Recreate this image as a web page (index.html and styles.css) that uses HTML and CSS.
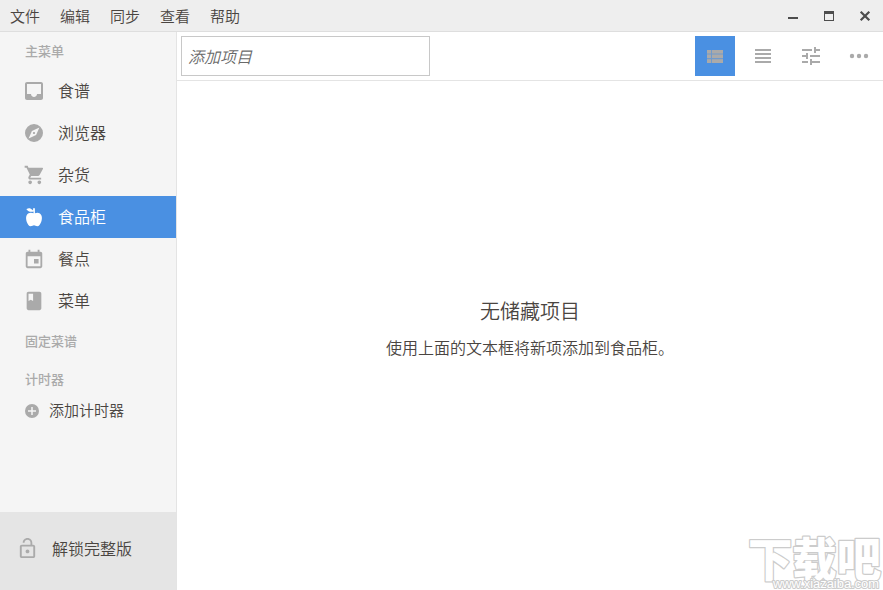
FILE: index.html
```
<!DOCTYPE html>
<html lang="zh-CN">

<head>
    <meta charset="UTF-8" />
    <title>食品柜</title>
    <link rel="stylesheet" href="styles.css">
</head>

<body>
    <div class="titlebar">
        <div class="menu">
            <span>文件</span>
            <span>编辑</span>
            <span>同步</span>
            <span>查看</span>
            <span>帮助</span>
        </div>
        <div class="window-buttons">
            <svg width="12" height="12" viewBox="0 0 12 12"><path d="M1 7h10v2H1z" /></svg>
            <svg width="12" height="12" viewBox="0 0 12 12"><path d="M1 1h10v10H1zM2 4v6h8V4z" fill-rule="evenodd" /></svg>
            <svg width="12" height="12" viewBox="0 0 12 12"><path d="M1.700 1.700l8.600 8.600M10.300 1.700l-8.600 8.600" stroke="#4d4d4d" stroke-width="2.200" /></svg>
        </div>
    </div>

    <div class="container">
        <div class="sidebar">
            <div class="section">主菜单</div>
            <div class="item">
                <svg class="icon" viewBox="0 0 24 24"><path d="M19 3H4.99c-1.11 0-1.98.89-1.98 2L3 19c0 1.1.88 2 1.99 2H19c1.1 0 2-.9 2-2V5c0-1.11-.9-2-2-2zm0 12h-4c0 1.66-1.35 3-3 3s-3-1.34-3-3H4.99V5H19v10z" /></svg>
                <span>食谱</span>
            </div>
            <div class="item">
                <svg class="icon" viewBox="0 0 24 24"><path d="M12 10.9c-.61 0-1.1.49-1.1 1.1s.49 1.1 1.1 1.1c.61 0 1.1-.49 1.1-1.1s-.49-1.1-1.1-1.1zM12 3a9 9 0 1 0 0 18 9 9 0 0 0 0-18zm2.1 11.1L6.600 17.400l3.300-7.500 7.500-3.300-3.300 7.500z" /></svg>
                <span>浏览器</span>
            </div>
            <div class="item">
                <svg class="icon icon-small" viewBox="0 0 24 24"><path transform="translate(.8)" d="M7 18c-1.1 0-1.99.9-1.99 2S5.900 22 7 22s2-.9 2-2-.9-2-2-2zM1 2v2h2l3.600 7.590-1.350 2.450c-.16.28-.25.61-.25.96 0 1.100.9 2 2 2h12v-2H7.420c-.14 0-.25-.11-.25-.25l.03-.12.9-1.630h7.450c.75 0 1.410-.41 1.750-1.030l3.580-6.490A1 1 0 0 0 20 4H5.210l-.94-2H1zm16 16c-1.100 0-1.990.9-1.990 2s.89 2 1.990 2 2-.9 2-2-.9-2-2-2z" /></svg>
                <span>杂货</span>
            </div>
            <div class="item active">
                <svg class="icon icon-small" viewBox="0 0 24 24"><path d="M20 10c2 3.500-1 12-4.200 12-1.800 0-2.800-1-3.800-1s-2 1-3.800 1C5 22 2 13.500 4 10s5.500-3 7.500-2V6C6 7.600 3.800 3.500 3.800 3.500S7 .5 11 5V2.500h2V8c2-1 5-1.500 7 2z" /></svg>
                <span>食品柜</span>
            </div>
            <div class="item">
                <svg class="icon icon-small" viewBox="0 0 24 24"><path d="M17 12h-5v5h5v-5zM16 2v2H8V2H6v2H5c-1.110 0-1.990.9-1.990 2L3 20c0 1.100.89 2 2 2h14c1.100 0 2-.9 2-2V6c0-1.100-.9-2-2-2h-1V2h-2zm3 18H5V9h14v11z" /></svg>
                <span>餐点</span>
            </div>
            <div class="item">
                <svg class="icon icon-small" viewBox="0 0 24 24"><path d="M18 2H6c-1.100 0-2 .9-2 2v16c0 1.100.9 2 2 2h12c1.100 0 2-.9 2-2V4c0-1.100-.9-2-2-2zM6 4h5v8l-2.500-1.500L6 12V4z" /></svg>
                <span>菜单</span>
            </div>
            <div class="section">固定菜谱</div>
            <div class="section">计时器</div>
            <div class="timer">
                <svg viewBox="0 0 14 14"><path d="M7 0a7 7 0 1 0 0 14A7 7 0 0 0 7 0zm4 7.750H7.750V11h-1.500V7.750H3v-1.500h3.250V3h1.500v3.250H11z" /></svg>
                <span>添加计时器</span>
            </div>
            <div class="unlock">
                <svg viewBox="0 0 24 24"><path d="M12 17c1.100 0 2-.9 2-2s-.9-2-2-2-2 .9-2 2 .9 2 2 2zm6-9h-1V6c0-2.760-2.240-5-5-5S7 3.240 7 6h1.900c0-1.710 1.390-3.100 3.100-3.100 1.710 0 3.100 1.390 3.100 3.100v2H6c-1.100 0-2 .9-2 2v10c0 1.100.9 2 2 2h12c1.100 0 2-.9 2-2V10c0-1.100-.9-2-2-2zm0 12H6V10h12v10z" /></svg>
                <span>解锁完整版</span>
            </div>
        </div>

        <div class="main">
            <div class="toolbar">
                <input type="text" class="add-input" placeholder="添加项目" />
                <div class="tools">
                    <button class="tool selected">
                        <svg viewBox="0 0 24 24"><path opacity=".4" d="M4 6h16v13H4z" /><path d="M4 6h4v3.500H4zM9 6h11v3.500H9zM4 10.500h4V14H4zM9 10.500h11V14H9zM4 15.200h4V19H4zM9 15.200h11V19H9z" /></svg>
                    </button>
                    <button class="tool">
                        <svg viewBox="0 0 24 24"><path d="M4 5h16v2H4zM4 9h16v2H4zM4 13h16v2H4zM4 17h16v2H4z" /></svg>
                    </button>
                    <button class="tool">
                        <svg viewBox="0 0 24 24"><path d="M3 17v2h6v-2H3zM3 5v2h10V5H3zm10 16v-2h8v-2h-8v-2h-2v6h2zM7 9v2H3v2h4v2h2V9H7zm14 4v-2H11v2h10zm-6-4h2V7h4V5h-4V3h-2v6z" /></svg>
                    </button>
                    <button class="tool">
                        <svg viewBox="0 0 24 24"><circle cx="5" cy="12" r="2.200" /><circle cx="12" cy="12" r="2.200" /><circle cx="19" cy="12" r="2.200" /></svg>
                    </button>
                </div>
            </div>
            <div class="empty">
                <div class="empty-title">无储藏项目</div>
                <div class="empty-text">使用上面的文本框将新项添加到食品柜。</div>
            </div>
        </div>
    </div>

    <!-- 右下角水印 -->
    <svg class="watermark" width="137" height="76" viewBox="0 0 137 76">
        <text class="mark-name" x="2" y="62" textLength="133" lengthAdjust="spacingAndGlyphs">下载吧</text>
        <text class="mark-url" x="27" y="74" textLength="106" lengthAdjust="spacingAndGlyphs">www.xiazaiba.com</text>
    </svg>
</body>

</html>
```

FILE: styles.css
```
* {
    box-sizing: border-box;
    font-family: "Noto Sans CJK SC", sans-serif;
}

body {
    margin: 0;
    height: 100vh;
    display: flex;
    flex-direction: column;
    overflow: hidden;
    font-weight: 350;
    color: #4a4541;
    background: #fff;
}

svg {
    display: block;
    flex: none;
    fill: #aaa;
}

/* 标题栏 */

.titlebar {
    height: 32px;
    flex: none;
    display: flex;
    justify-content: space-between;
    align-items: center;
    padding: 0 12px 0 10px;
    background: #eee;
    border-bottom: 1px solid #dedede;
}

.menu {
    display: flex;
    gap: 20px;
    font-size: 15px;
    line-height: 30px;
}

.window-buttons {
    display: flex;
    gap: 24px;
}

.window-buttons svg {
    fill: #4d4d4d;
}

.container {
    flex: 1;
    min-height: 0;
    display: flex;
}

/* 侧边栏 */

.sidebar {
    width: 177px;
    display: flex;
    flex-direction: column;
    background: #f5f5f5;
    border-right: 1px solid #e4e4e4;
}

.section {
    height: 38px;
    padding-left: 25px;
    font-size: 13px;
    line-height: 37px;
    font-weight: 500;
    color: #aaa;
}

.item {
    height: 42px;
    display: flex;
    align-items: center;
    gap: 12px;
    padding-left: 22px;
    font-size: 16px;
    line-height: 40px;
}

.item span {
    height: 42px;
}

.icon {
    width: 24px;
    height: 24px;
}

.icon-small {
    width: 22px;
    height: 22px;
    margin: 0 1px;
}

.item.active {
    background: #4a90e2;
    color: #fff;
}

.active .icon {
    fill: #fff;
}

.timer {
    height: 26px;
    display: flex;
    align-items: center;
    gap: 10px;
    padding-left: 25px;
    font-size: 15px;
    line-height: 24px;
}

.timer span {
    height: 26px;
}

.timer svg {
    width: 14px;
    height: 14px;
}

.unlock {
    height: 78px;
    margin-top: auto;
    display: flex;
    align-items: center;
    gap: 13px;
    padding: 0 0 6px 16px;
    font-size: 16px;
    background: #e5e5e5;
}

.unlock svg {
    width: 23px;
    height: 23px;
}

/* 主区域 */

.main {
    flex: 1;
    display: flex;
    flex-direction: column;
}

.toolbar {
    height: 49px;
    flex: none;
    display: flex;
    justify-content: space-between;
    align-items: center;
    padding: 0 4px;
    border-bottom: 1px solid #e4e4e4;
}

.add-input {
    width: 249px;
    height: 40px;
    padding: 0 6px 1px;
    border: 1px solid #c8c8c8;
    font-size: 16px;
    font-style: italic;
    font-weight: 350;
}

.add-input::placeholder {
    color: #6a6a6a;
}

.tools {
    display: flex;
    gap: 8px;
}

.tool {
    width: 40px;
    height: 40px;
    padding: 0;
    display: flex;
    align-items: center;
    justify-content: center;
    border: 0;
    background: none;
}

.tool.selected {
    background: #4a90e2;
}

.tool svg {
    width: 24px;
    height: 24px;
}

.empty {
    flex: 1;
    display: flex;
    flex-direction: column;
    align-items: center;
    justify-content: center;
    padding-bottom: 14px;
}

.empty-title {
    font-size: 20px;
    line-height: 37px;
}

.empty-text {
    font-size: 16px;
    line-height: 37px;
}

/* 水印 */

.watermark {
    position: absolute;
    right: 0;
    bottom: 0;
}

.watermark text {
    fill: #fff;
    stroke: #ccc;
    paint-order: stroke;
    stroke-linejoin: round;
}

.mark-name {
    font-size: 46px;
    font-weight: 900;
    stroke-width: 2.5px;
}

.mark-url {
    font-family: "Liberation Sans", sans-serif;
    font-size: 12px;
    font-weight: normal;
    stroke-width: 2px;
}
```
